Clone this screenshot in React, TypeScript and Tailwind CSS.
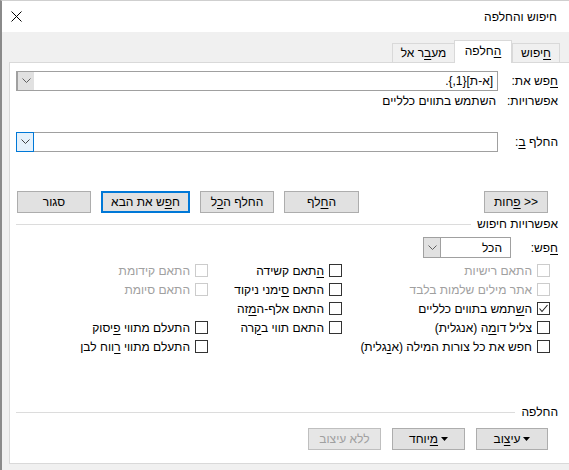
import React from "react";

const u = (s: string) => <span className="underline underline-offset-[2px]">{s}</span>;

function Chevron({ color = "#606060" }: { color?: string }) {
  return (
    <svg width="9" height="6" viewBox="0 0 9 6">
      <polyline points="0.5,0.5 4.5,4.5 8.5,0.5" fill="none" stroke={color} strokeWidth="1" />
    </svg>
  );
}

function ComboInput({ value, focused }: { value?: string; focused?: boolean }) {
  return (
    <div className="flex-1 h-[20px] border border-[#a0a0a0] bg-white flex flex-row-reverse items-stretch">
      {focused ? (
        <div className="w-[18px] bg-[#e5f1fb] border border-[#0078d7] -m-px flex items-center justify-center">
          <Chevron color="#404040" />
        </div>
      ) : (
        <div className="w-[17px] bg-[#e1e1e1] border-l border-[#a0a0a0] flex items-center justify-center">
          <Chevron />
        </div>
      )}
      <div className="flex-1 pr-[4px] flex items-center text-[12px] leading-[16px]">{value}</div>
    </div>
  );
}

function Btn({
  children,
  w,
  primary,
  disabled,
}: {
  children: React.ReactNode;
  w: string;
  primary?: boolean;
  disabled?: boolean;
}) {
  const base = "h-[22px] flex items-center justify-center text-[12px] leading-[16px]";
  if (primary)
    return <div className={`${base} ${w} bg-[#e1e1e1] border-2 border-[#0078d7]`}>{children}</div>;
  if (disabled)
    return (
      <div className={`${base} ${w} bg-[#e6e6e6] border border-[#bfbfbf] text-[#a0a0a0]`}>{children}</div>
    );
  return <div className={`${base} ${w} bg-[#e1e1e1] border border-[#adadad]`}>{children}</div>;
}

function Box({ checked, disabled }: { checked?: boolean; disabled?: boolean }) {
  return (
    <span
      className={`w-[13px] h-[13px] shrink-0 bg-white border flex items-center justify-center ${
        disabled ? "border-[#cccccc]" : "border-[#333333]"
      }`}
    >
      {checked && (
        <svg width="11" height="11" viewBox="0 0 11 11">
          <polyline points="1.5,5.5 4,8.5 9.5,2" fill="none" stroke="#222" strokeWidth="1.1" />
        </svg>
      )}
    </span>
  );
}

function Check({
  children,
  checked,
  disabled,
}: {
  children?: React.ReactNode;
  checked?: boolean;
  disabled?: boolean;
}) {
  if (!children) return <div className="h-[19px]" />;
  return (
    <div className="h-[19px] flex items-center gap-[5px]">
      <Box checked={checked} disabled={disabled} />
      <span className={`text-[12px] leading-[16px] whitespace-nowrap ${disabled ? "text-[#a0a0a0]" : "text-black"}`}>
        {children}
      </span>
    </div>
  );
}

function Separator({ label }: { label: string }) {
  return (
    <div className="h-[16px] flex items-center">
      <span className="text-[12px] leading-[16px] whitespace-nowrap">{label}</span>
      <div className="flex-1 h-px bg-[#dcdcdc] mr-[6px]" />
    </div>
  );
}

function DropArrow() {
  return (
    <svg width="7" height="4" viewBox="0 0 7 4">
      <polygon points="0,0 7,0 3.5,4" fill="#000" />
    </svg>
  );
}

export default function App() {
  return (
    <div
      dir="rtl"
      className="w-[569px] h-[470px] overflow-hidden bg-[#f0f0f0] border-t border-t-[#cfcfcf] border-l-2 border-l-[#8a8a8a] flex flex-col text-black font-['Liberation_Sans',Arial,sans-serif]"
    >
      {/* title bar */}
      <div className="h-[31px] shrink-0 bg-white flex items-center justify-between pr-[12px] pl-[9px]">
        <span className="text-[12px] leading-[16px]">חיפוש והחלפה</span>
        <svg width="11" height="11" viewBox="0 0 11 11">
          <path d="M0.5 0.5 L10.5 10.5 M10.5 0.5 L0.5 10.5" stroke="#000" strokeWidth="1" />
        </svg>
      </div>

      {/* tabs */}
      <div className="pt-[8px] pr-[9px] flex items-end h-[31px] -mb-px relative z-10 shrink-0">
        <div className="w-[48px] h-[19px] mb-px bg-[#f0f0f0] border border-b-0 border-[#d9d9d9] flex items-center justify-center text-[12px]">
          {u("ח")}יפוש
        </div>
        <div className="w-[58px] h-[23px] bg-white border border-b-0 border-[#d9d9d9] flex items-center justify-center text-[12px] pb-[2px]">
          {u("ה")}חלפה
        </div>
        <div className="w-[62px] h-[19px] mb-px bg-[#f0f0f0] border border-b-0 border-r-0 border-[#d9d9d9] flex items-center justify-center text-[12px]">
          מע{u("ב")}ר אל
        </div>
      </div>

      {/* panel */}
      <div className="ml-[7px] h-[402px] shrink-0 bg-white border border-r-0 border-[#d9d9d9] pr-[11px] pl-[6px] flex flex-col">
        <div className="mt-[8px] flex items-center">
          <span className="w-[60px] text-[12px] leading-[16px]">{u("ח")}פש את:</span>
          <ComboInput value="[א-ת]{1,}." />
        </div>
        <div className="mt-[2px] flex items-center h-[16px] text-[12px] leading-[16px]">
          <span className="w-[62px]">אפשרויות:</span>
          <span>השתמש בתווים כלליים</span>
        </div>
        <div className="mt-[23px] flex items-center">
          <span className="w-[60px] text-[12px] leading-[16px]">
            החלף {u("ב")}:
          </span>
          <ComboInput focused />
        </div>

        <div className="mt-[39px] flex items-center justify-between pr-[10px] pl-[1px]">
          <Btn w="w-[64px]">
            <span>
              {"<< "}
              {u("פ")}חות
            </span>
          </Btn>
          <div className="flex gap-[10px]">
            <Btn w="w-[75px]">ה{u("ח")}לף</Btn>
            <Btn w="w-[74px]">החלף ה{u("כ")}ל</Btn>
            <Btn w="w-[89px]" primary>
              ח{u("פ")}ש את הבא
            </Btn>
            <Btn w="w-[74px]">סגור</Btn>
          </div>
        </div>

        <div className="mt-[3px]">
          <Separator label="אפשרויות חיפוש" />
        </div>

        <div className="mt-[5px] flex items-center">
          <span className="w-[47px] text-[12px] leading-[16px]">{u("ח")}פש:</span>
          <div className="w-[88px] h-[21px] border border-[#a0a0a0] bg-white flex items-stretch">
            <div className="flex-1 pr-[8px] flex items-center text-[12px]">הכל</div>
            <div className="w-[17px] bg-[#e1e1e1] border-r border-[#a0a0a0] flex items-center justify-center">
              <Chevron />
            </div>
          </div>
        </div>

        <div className="mt-[3px] mr-[8px] grid grid-cols-[208px_134px_1fr] grid-flow-col grid-rows-5">
          <Check disabled>התאם רישיות</Check>
          <Check disabled>אתר מילים שלמות בלבד</Check>
          <Check checked>
            ה{u("ש")}תמש בתווים כלליים
          </Check>
          <Check>צליל דו{u("מ")}ה (אנגלית)</Check>
          <Check>חפש את כל צורות המילה (א{u("נ")}גלית)</Check>

          <Check>{u("ה")}תאם קשידה</Check>
          <Check>התאם {u("ס")}ימני ניקוד</Check>
          <Check>התאם אלף-ה{u("מ")}זה</Check>
          <Check>התאם תווי ב{u("ק")}רה</Check>
          <Check />

          <Check disabled>התאם קידומת</Check>
          <Check disabled>התאם סיומת</Check>
          <Check />
          <Check>התעלם מתווי {u("פ")}יסוק</Check>
          <Check>התעלם מתווי {u("ר")}ווח לבן</Check>
        </div>

        <div className="flex-1" />

        <Separator label="החלפה" />
        <div className="mt-[8px] mb-[13px] flex gap-[11px] pr-[10px]">
          <Btn w="w-[72px]">
            <span dir="ltr" className="flex items-center gap-[3px]">
              <span>עי{u("צ")}וב</span>
              <DropArrow />
            </span>
          </Btn>
          <Btn w="w-[73px]">
            <span dir="ltr" className="flex items-center gap-[3px]">
              <span>{u("מ")}יוחד</span>
              <DropArrow />
            </span>
          </Btn>
          <Btn w="w-[73px]" disabled>
            ללא עיצוב
          </Btn>
        </div>
      </div>
    </div>
  );
}
